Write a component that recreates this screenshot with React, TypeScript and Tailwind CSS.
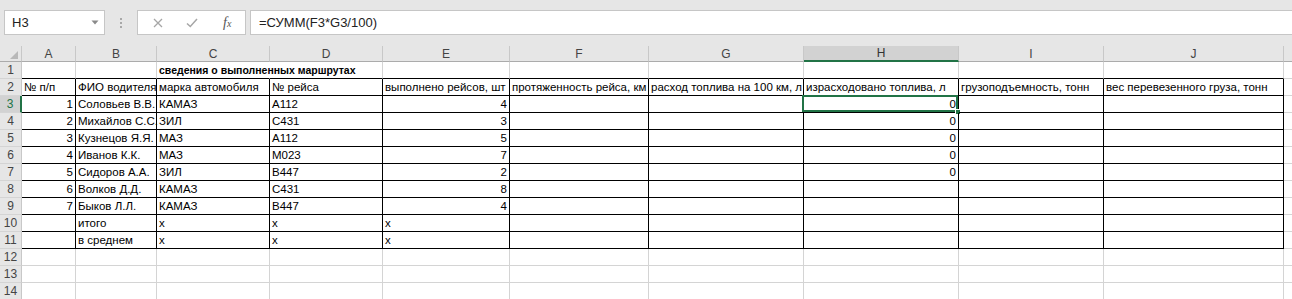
import React from "react";

const COLS = ["A", "B", "C", "D", "E", "F", "G", "H", "I", "J"];

type Row = (string | null)[];

const DATA: Record<number, Row> = {
  1: [null, null, "сведения о выполненных маршрутах", null, null, null, null, null, null, null],
  2: [
    "№ п/п",
    "ФИО водителя",
    "марка автомобиля",
    "№ рейса",
    "выполнено рейсов, шт",
    "протяженность рейса, км",
    "расход топлива на 100 км, л",
    "израсходовано топлива, л",
    "грузоподъемность, тонн",
    "вес перевезенного груза, тонн",
  ],
  3: ["1", "Соловьев В.В.", "КАМАЗ", "А112", "4", null, null, "0", null, null],
  4: ["2", "Михайлов С.С.", "ЗИЛ", "С431", "3", null, null, "0", null, null],
  5: ["3", "Кузнецов Я.Я.", "МАЗ", "А112", "5", null, null, "0", null, null],
  6: ["4", "Иванов К.К.", "МАЗ", "М023", "7", null, null, "0", null, null],
  7: ["5", "Сидоров А.А.", "ЗИЛ", "В447", "2", null, null, "0", null, null],
  8: ["6", "Волков Д.Д.", "КАМАЗ", "С431", "8", null, null, null, null, null],
  9: ["7", "Быков Л.Л.", "КАМАЗ", "В447", "4", null, null, null, null, null],
  10: [null, "итого", "х", "х", "х", null, null, null, null, null],
  11: [null, "в среднем", "х", "х", "х", null, null, null, null, null],
};

const ROWS = Array.from({ length: 14 }, (_, i) => i + 1);

function isNum(v: string) {
  return /^\d+$/.test(v);
}

function DataCell({ r, c }: { r: number; c: number }) {
  const v = DATA[r]?.[c] ?? null;
  const blackB = r <= 11;
  const blackR = r >= 2 && r <= 11;
  const hideR = r === 1 && c === 2;
  const bCls = blackB ? "border-b-black" : "border-b-[#d4d4d4]";
  const rCls = hideR ? "border-r-transparent" : blackR ? "border-r-black" : "border-r-[#d4d4d4]";
  const selected = r === 3 && c === 7;
  const right = v !== null && isNum(v);
  return (
    <div
      className={`relative flex h-[17px] items-center border-b border-r ${bCls} ${rCls} ${
        right ? "justify-end pr-[2px]" : "justify-start pl-[2px]"
      }`}
    >
      {v !== null && (
        <span
          className={`whitespace-nowrap leading-[14px] text-black ${
            r === 1 ? "text-[10.5px] font-bold" : "text-[11.5px]"
          } ${right ? "" : "absolute left-[2px] top-[1px]"}`}
        >
          {v}
        </span>
      )}
      {selected && (
        <>
          <div className="pointer-events-none absolute -left-[2px] -top-[1px] right-0 bottom-0 border-2 border-[#217346]" />
          <div className="absolute -right-[3px] -bottom-[3px] h-[6px] w-[6px] border border-white bg-[#217346]" />
        </>
      )}
    </div>
  );
}

export default function App() {
  return (
    <div
      className="h-[299px] w-[1292px] overflow-hidden bg-white"
      style={{ fontFamily: '"Liberation Sans", Arial, sans-serif' }}
    >
      {/* Formula bar */}
      <div className="flex h-[46px] items-start bg-[#e6e6e6] pt-[10px]">
        <div className="ml-[4px] flex h-[25px] w-[101px] items-center justify-between border border-[#c6c6c6] bg-white pl-[7px] pr-[5px]">
          <span className="text-[13px] text-[#222]">H3</span>
          <svg width="8" height="5" viewBox="0 0 8 5">
            <path d="M0.5 0.5 L7.5 0.5 L4 4.5 Z" fill="#8a8a8a" />
          </svg>
        </div>
        <div className="flex h-[25px] w-[32px] flex-col items-center justify-center gap-[2px]">
          <div className="h-[2px] w-[2px] bg-[#a8a8a8]" />
          <div className="h-[2px] w-[2px] bg-[#a8a8a8]" />
          <div className="h-[2px] w-[2px] bg-[#a8a8a8]" />
        </div>
        <div className="flex h-[25px] w-[109px] items-center border border-[#c6c6c6] bg-white">
          <div className="flex w-[36px] justify-center pl-[4px]">
            <svg width="10" height="10" viewBox="0 0 10 10">
              <path d="M1 1 L9 9 M9 1 L1 9" stroke="#a6a6a6" strokeWidth="1.3" />
            </svg>
          </div>
          <div className="flex w-[36px] justify-center">
            <svg width="12" height="10" viewBox="0 0 12 10">
              <path d="M1 5.5 L4.3 8.5 L11 1" stroke="#a6a6a6" strokeWidth="1.5" fill="none" />
            </svg>
          </div>
          <div className="flex w-[36px] justify-center">
            <span
              className="text-[14px] italic leading-none text-[#555]"
              style={{ fontFamily: '"Liberation Serif", serif' }}
            >
              f<span className="text-[10px]">x</span>
            </span>
          </div>
        </div>
        <div className="ml-[4px] flex h-[25px] flex-1 items-center border border-r-0 border-[#c6c6c6] bg-white pl-[8px]">
          <span className="text-[13px] text-[#222]">=СУММ(F3*G3/100)</span>
        </div>
      </div>

      {/* Grid */}
      <div className="grid grid-cols-[22px_54px_81px_113px_113px_127px_139px_155px_155px_145px_180px_1fr]">
        {/* Column headers */}
        <div className="relative h-[16px] border-b border-r border-b-[#ababab] border-r-[#c8c8c8] bg-[#e6e6e6]">
          <svg className="absolute bottom-[2px] right-[3px]" width="8" height="8" viewBox="0 0 8 8">
            <path d="M8 0 L8 8 L0 8 Z" fill="#b8b8b8" />
          </svg>
        </div>
        {COLS.map((c) => (
          <div
            key={c}
            className={`flex h-[16px] items-center justify-center border-r border-r-[#c8c8c8] text-[12px] leading-none ${
              c === "H"
                ? "border-b-2 border-b-[#217346] bg-[#d2d2d2] text-[#333]"
                : "border-b border-b-[#ababab] bg-[#e6e6e6] text-[#444]"
            }`}
          >
            {c}
          </div>
        ))}
        <div className="h-[16px] border-b border-b-[#ababab] bg-[#e6e6e6]" />

        {ROWS.map((r) => (
          <React.Fragment key={r}>
            <div
              className={`flex h-[17px] items-center justify-center border-b border-b-[#d4d4d4] text-[12px] leading-none ${
                r === 3
                  ? "border-r-2 border-r-[#217346] bg-[#d2d2d2] text-[#217346]"
                  : "border-r border-r-[#c8c8c8] bg-[#e6e6e6] text-[#444]"
              }`}
            >
              {r}
            </div>
            {COLS.map((_, c) => (
              <DataCell key={c} r={r} c={c} />
            ))}
            <div className="h-[17px] border-b border-b-[#d4d4d4]" />
          </React.Fragment>
        ))}
      </div>
    </div>
  );
}
